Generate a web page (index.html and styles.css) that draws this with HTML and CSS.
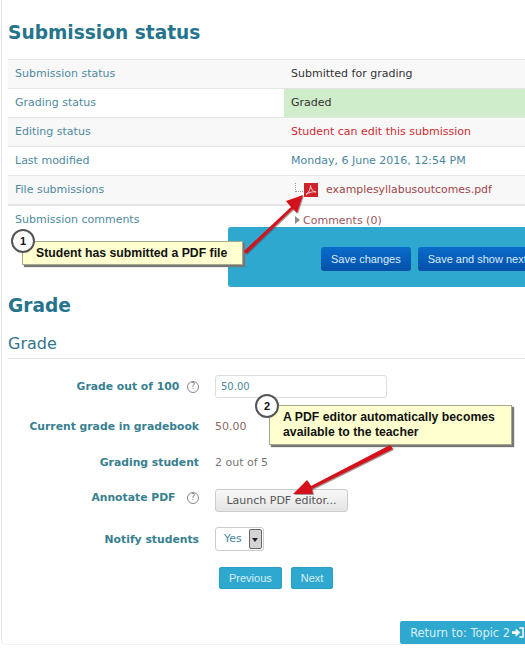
FILE: index.html
```html
<!DOCTYPE html>
<html lang="en">
<head>
  <meta charset="UTF-8">
  <meta name="viewport" content="width=device-width, initial-scale=1.0">
  <title>Submission status</title>
  <link rel="stylesheet" href="styles.css">
</head>
<body>
  <div class="page">
    <h2 class="heading-status">Submission status</h2>

    <div class="status-table">
      <div class="row shaded">
        <div class="cell-label">Submission status</div>
        <div class="cell-value">Submitted for grading</div>
      </div>
      <div class="row">
        <div class="cell-label">Grading status</div>
        <div class="cell-value graded">Graded</div>
      </div>
      <div class="row shaded">
        <div class="cell-label">Editing status</div>
        <div class="cell-value warn">Student can edit this submission</div>
      </div>
      <div class="row">
        <div class="cell-label">Last modified</div>
        <div class="cell-value date">Monday, 6 June 2016, 12:54 PM</div>
      </div>
      <div class="row shaded row-file">
        <div class="cell-label">File submissions</div>
        <div class="cell-value file">
          <span class="tree-line"></span>
          <svg class="pdf-icon" width="14" height="14" viewBox="0 0 14 14">
            <rect width="14" height="14" fill="#cf2229"/>
            <path d="M2 11.500C5 9.500 6.500 6 6.500 2.500C7 6.500 9 8.500 12 9C9 8.500 5.500 9 2 11.500Z" fill="none" stroke="#f6d0d0" stroke-width="1"/>
          </svg>
          <a class="file-link">examplesyllabusoutcomes.pdf</a>
        </div>
      </div>
      <div class="row row-comments">
        <div class="cell-label">Submission comments</div>
        <div class="cell-value comments"><span class="caret"></span>Comments (0)</div>
      </div>
    </div>

    <div class="save-panel">
      <button class="btn-save">Save changes</button>
      <button class="btn-save">Save and show next</button>
    </div>

    <h2 class="heading-grade">Grade</h2>
    <h3 class="heading-sub">Grade</h3>

    <div class="form-grid">
      <div class="form-label">Grade out of 100 <span class="help">?</span></div>
      <div><input class="grade-input" type="text" value="50.00"></div>

      <div class="form-label nudge-down">Current grade in gradebook</div>
      <div class="current-grade nudge-down">50.00</div>

      <div class="form-label">Grading student</div>
      <div class="plain-value">2 out of 5</div>

      <div class="form-label nudge-up">Annotate PDF &nbsp;<span class="help">?</span></div>
      <div><button class="btn-launch">Launch PDF editor...</button></div>

      <div class="form-label">Notify students</div>
      <div class="select-box">
        <span class="select-text">Yes</span>
        <span class="select-arrow"></span>
      </div>
    </div>

    <div class="pager">
      <button class="btn-pager">Previous</button>
      <button class="btn-pager">Next</button>
    </div>

    <div class="return-row">
      <a class="btn-return">Return to: Topic 2
        <svg width="12" height="11" viewBox="0 0 13 12">
          <path d="M0 4.500H4V1.500L9 6L4 10.500V7.500H0Z" fill="#fff"/>
          <path d="M8 1H12V11H8" fill="none" stroke="#fff" stroke-width="1.600"/>
        </svg>
      </a>
    </div>

    <!-- annotations laid over the screenshot -->
    <div class="callout callout-one">Student has submitted a PDF file</div>
    <div class="step step-one">1</div>
    <div class="callout callout-two">A PDF editor automatically becomes available to the teacher</div>
    <div class="step step-two">2</div>

    <svg class="arrows" width="525" height="649" viewBox="0 0 525 649">
      <g fill="#5a3a3a" opacity="0.5" transform="translate(1 1)">
        <path d="M244 251L291 207L286 201L303 195L297 213L293 209L246 254Z"/>
        <path d="M390 445L311 486L307 480L293 494L313 494L312 489L393 449Z"/>
      </g>
      <g fill="#d3121c">
        <path d="M244 251L291 207L286 201L303 195L297 213L293 209L246 254Z"/>
        <path d="M390 445L311 486L307 480L293 494L313 494L312 489L393 449Z"/>
      </g>
    </svg>
  </div>
</body>
</html>
```

FILE: styles.css
```css
* {
  margin: 0;
  padding: 0;
  box-sizing: border-box;
}

body {
  font-family: "DejaVu Sans", Verdana, sans-serif;
  font-size: 11px;
  background-color: white;
  color: #333;
}

.page {
  position: relative;
  width: 525px;
  height: 649px;
  overflow: hidden;
  padding: 21px 0 0 8px;
}

/* faint frame of the page behind the content */
.page::before {
  content: "";
  position: absolute;
  left: 1px;
  top: -6px;
  right: -6px;
  bottom: 4px;
  border-left: 1px solid #e8e8e8;
  border-bottom: 1px solid #f2f2f2;
  border-radius: 5px;
}

h2 {
  position: relative;
  color: #26748c;
  font-size: 18.600px;
  font-weight: bold;
  line-height: 24px;
}

.heading-status {
  margin-bottom: 14px;
}

.status-table {
  position: relative;
  border-top: 1px solid #e8e8e8;
}

.row {
  display: flex;
  height: 29px;
  border-bottom: 1px solid #e4e4e4;
}

.row.shaded {
  background-color: #f8f8f8;
}

.row-file {
  height: 30px;
  border-bottom-width: 2px;
}

.row-comments {
  height: 21px;
  border-bottom: none;
}

.cell-label {
  width: 276px;
  padding: 7px 0 0 7px;
  line-height: 14px;
  color: #4f8a9e;
}

.cell-value {
  flex: 1;
  padding: 7px 0 0 7px;
  line-height: 14px;
  white-space: nowrap;
}

.graded {
  background-color: #cfeccb;
}

.warn {
  color: #cf2a32;
}

.date {
  color: #4a86a0;
}

.file {
  display: flex;
  align-items: center;
  padding: 0 0 0 11px;
}

.tree-line {
  width: 8px;
  height: 9px;
  margin-bottom: 6px;
  border-left: 1px dotted #999;
  border-bottom: 1px dotted #999;
}

.pdf-icon {
  display: block;
  margin: 0 8px 0 1px;
}

.file-link {
  font-size: 10.900px;
  color: #a0474a;
}

.comments {
  color: #a0575a;
  padding: 8px 0 0 11px;
}

.caret {
  display: inline-block;
  width: 0;
  height: 0;
  margin-right: 3px;
  border-left: 5px solid #8a8a8a;
  border-top: 4px solid transparent;
  border-bottom: 4px solid transparent;
}

.save-panel {
  position: relative;
  display: flex;
  gap: 7px;
  align-items: flex-start;
  width: 320px;
  height: 60px;
  margin-left: 220px;
  padding: 20px 0 0 93px;
  background-color: #2fa8cf;
  border-radius: 3px 0 0 3px;
  white-space: nowrap;
}

.btn-save {
  flex-shrink: 0;
  height: 24px;
  padding: 0 10px;
  font-family: "Liberation Sans", Arial, sans-serif;
  font-size: 11px;
  color: #d8ecf8;
  background: linear-gradient(#0a6ccb, #0550a8);
  border: none;
  border-radius: 3px;
}

.heading-grade {
  margin-top: 7px;
}

.heading-sub {
  position: relative;
  margin-top: 16px;
  padding-bottom: 5px;
  border-bottom: 1px solid #e4e4e4;
  color: #33748c;
  font-size: 16px;
  font-weight: normal;
  line-height: 19px;
}

.form-grid {
  position: relative;
  display: grid;
  grid-template-columns: 191px auto;
  grid-template-rows: 23px 23px 23px 23px 24px;
  row-gap: 15px;
  column-gap: 16px;
  margin-top: 16px;
  justify-content: start;
}

.form-label {
  display: flex;
  align-items: center;
  justify-content: flex-end;
  gap: 4px;
  white-space: pre;
  font-size: 10.800px;
  font-weight: bold;
  color: #37808f;
}

.nudge-down {
  padding-top: 3px;
}

.nudge-up {
  padding-bottom: 6px;
}

.help {
  display: inline-block;
  width: 12px;
  height: 12px;
  border: 1px solid #888;
  border-radius: 50%;
  font-size: 8px;
  font-weight: normal;
  line-height: 10px;
  text-align: center;
  color: #777;
}

.grade-input {
  display: block;
  width: 172px;
  height: 23px;
  padding: 0 5px;
  font-family: inherit;
  font-size: 10px;
  color: #4a86a0;
  border: 1px solid #ddd;
  border-radius: 3px;
  outline: none;
}

.current-grade,
.plain-value {
  display: flex;
  align-items: center;
  color: #8f6a5e;
}

.plain-value {
  color: #777;
}

.btn-launch {
  display: block;
  width: 133px;
  height: 23px;
  font-family: inherit;
  font-size: 11px;
  color: #555;
  background: linear-gradient(#f8f8f8, #e4e4e4);
  border: 1px solid #ccc;
  border-radius: 3px;
}

.select-box {
  display: flex;
  align-items: center;
  width: 49px;
  height: 24px;
  padding: 1px 1px 1px 8px;
  border: 1px solid #ccc;
  border-radius: 3px;
  color: #4a86a0;
}

.select-text {
  flex: 1;
  padding-bottom: 2px;
}

.select-arrow {
  position: relative;
  width: 13px;
  height: 100%;
  background-color: #d4d4d4;
  border: 1px solid #666;
  border-radius: 2px;
}

.select-arrow::after {
  content: "";
  position: absolute;
  left: 2px;
  top: 8px;
  border-left: 3px solid transparent;
  border-right: 3px solid transparent;
  border-top: 4px solid #222;
}

.pager {
  position: relative;
  display: flex;
  gap: 9px;
  margin: 16px 0 0 211px;
}

.btn-pager {
  height: 22px;
  padding: 0 9px;
  font-family: "Liberation Sans", Arial, sans-serif;
  font-size: 11px;
  color: #d8f0f8;
  background-color: #2fa8cf;
  border: 1px solid #2a9ec4;
  border-radius: 2px;
}

.return-row {
  position: relative;
  display: flex;
  justify-content: flex-end;
  margin-top: 32px;
}

.btn-return {
  display: flex;
  align-items: center;
  gap: 2px;
  height: 23px;
  padding: 0 1px 0 10px;
  font-size: 11.400px;
  color: #d8f0f8;
  background-color: #2fa8cf;
  border-radius: 2px 0 0 2px;
  white-space: nowrap;
}

.callout {
  position: absolute;
  padding: 0 8px 0 13px;
  font-family: "Liberation Sans", Arial, sans-serif;
  font-size: 12.250px;
  font-weight: bold;
  line-height: 15px;
  color: #111;
  background-color: #ffffcf;
  border: 1px solid #a8a890;
  box-shadow: 2px 2px 1px #777;
}

.callout-one {
  left: 22px;
  top: 241px;
  width: 221px;
  height: 24px;
  line-height: 23px;
}

.callout-two {
  left: 269px;
  top: 405px;
  width: 243px;
  height: 40px;
  padding-top: 4px;
}

.step {
  position: absolute;
  width: 24px;
  height: 24px;
  font-family: "Liberation Sans", Arial, sans-serif;
  font-size: 11px;
  font-weight: bold;
  line-height: 21px;
  text-align: center;
  color: #111;
  background-color: white;
  border: 2px solid #555;
  border-radius: 50%;
}

.step-one {
  left: 11px;
  top: 229px;
}

.step-two {
  left: 255px;
  top: 394px;
}

.arrows {
  position: absolute;
  left: 0;
  top: 0;
  pointer-events: none;
}
```
